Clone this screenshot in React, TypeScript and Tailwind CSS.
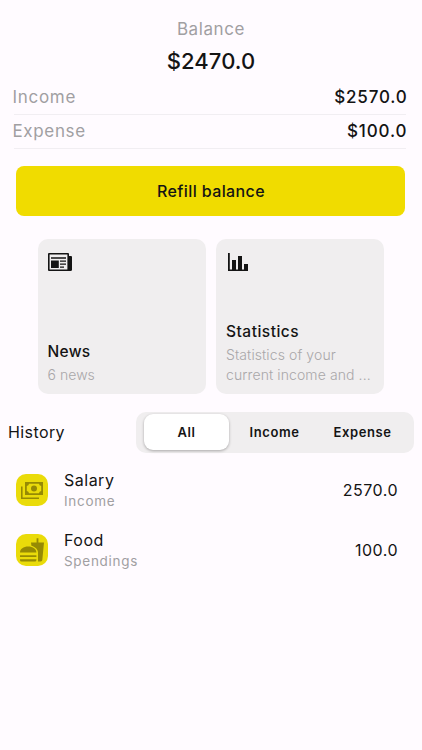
import { useState } from "react";
import clsx from "clsx";

type Operation = { title: string; kind: string; amount: string; icon: React.ReactNode };

const tabs = [
  { name: "All", width: "w-[85px]" },
  { name: "Income", width: "w-[91px]" },
  { name: "Expense", width: "w-[85px]" },
];

function NewsIcon() {
  return (
    <svg width="24" height="18" viewBox="0 0 24 18" fill="#141414">
      <path fillRule="evenodd" d="M1 0h19a1 1 0 0 1 1 1v17H1a1 1 0 0 1-1-1V1a1 1 0 0 1 1-1zM1.600 1.600v14.800h17.800V1.600z" />
      <path d="M21 3h2a1 1 0 0 1 1 1v12.500a1.500 1.500 0 0 1-1.500 1.500H20V3z" />
      <path d="M3 4.300h15v1.400H3zM3 7.600h7.800v7.400H3zM12 7.400h6v1.400h-6zM12 10.400h6v1.400h-6zM12 13.400h4v1.400h-4z" />
    </svg>
  );
}

function ChartIcon() {
  return (
    <svg width="20" height="18" viewBox="0 0 20 18" fill="#141414">
      <path d="M0 0h1.800v16.400H4V7h4v9.400h2V3h4v13.400h2V11h4v7H0z" />
    </svg>
  );
}

function CashIcon() {
  return (
    <svg width="22" height="17" viewBox="0 0 22 17" fill="#968a04">
      <path d="M0 4.500h1.600v10.900H18V17H0z" />
      <path
        fillRule="evenodd"
        d="M4 0h18v13H4zM8 1.800A2.400 2.400 0 0 1 5.800 4v5A2.400 2.400 0 0 1 8 11.200h10A2.400 2.400 0 0 1 20.200 9V4A2.400 2.400 0 0 1 18 1.800z"
      />
      <circle cx="13" cy="6.500" r="3" />
    </svg>
  );
}

function FoodIcon() {
  return (
    <svg width="24" height="24" viewBox="0 0 24 24" fill="#968a04">
      <path d="M0 14.500C0 11 3.500 8.500 8.200 8.500s8.200 2.500 8.200 6zM0 17.200h16.400v1.800H0zM0 21.200h16.400v.8a1.500 1.500 0 0 1-1.500 1.500H1.500A1.500 1.500 0 0 1 0 22z" />
      <path d="M11 4.500h5.600V.300h1.800v4.200H24l-1.700 17.600a1.500 1.500 0 0 1-1.500 1.400H18v-9c0-3-2.400-5.600-6.600-6.800z" />
    </svg>
  );
}

const operations: Operation[] = [
  { title: "Salary", kind: "Income", amount: "2570.0", icon: <CashIcon /> },
  { title: "Food", kind: "Spendings", amount: "100.0", icon: <FoodIcon /> },
];

export default function App() {
  const [tab, setTab] = useState("All");

  return (
    <div className="min-h-[750px] w-full bg-[#fffbff] font-['Inter',sans-serif] text-[#141414]">
      {/* Balance */}
      <header className="flex flex-col items-center pt-[18px]">
        <p className="text-[17px] leading-[22px] tracking-[0.6px] text-[#a19fa2]">Balance</p>
        <p className="mt-[7px] text-[22px] leading-7 font-medium tracking-[0.1px]">$2470.0</p>
      </header>

      <dl className="mt-1.5 pr-4 pl-3.5 text-[17px]">
        <div className="flex h-[34px] items-center justify-between border-b border-[#f1eef2]">
          <dt className="-ml-[1.5px] tracking-[0.7px] text-[#a19fa2]">Income</dt>
          <dd className="-mr-[1.5px] font-medium tracking-[0.8px]">$2570.0</dd>
        </div>
        <div className="flex h-[34px] items-center justify-between border-b border-[#f1eef2]">
          <dt className="-ml-[1.5px] tracking-[0.65px] text-[#a19fa2]">Expense</dt>
          <dd className="-mr-[1.5px] font-medium tracking-[0.9px]">$100.0</dd>
        </div>
      </dl>

      <div className="mt-[17px] pr-[17px] pl-4">
        <button className="h-[50px] w-full rounded-lg bg-[#f0dc00] pl-px text-base font-medium tracking-[0.4px]">
          Refill balance
        </button>
      </div>

      {/* Cards */}
      <section className="mt-[22.5px] flex gap-2.5 pl-[37.500px]">
        <article className="flex h-[155px] w-[168.500px] flex-col justify-between rounded-[10px] bg-[#f0eeef] px-2.5 pt-3.5 pb-[9px]">
          <NewsIcon />
          <div>
            <h2 className="text-[15.5px] leading-[26px] font-medium tracking-[0.3px]">News</h2>
            <p className="text-sm leading-5 font-light tracking-[0.05px] text-[#a9a7a9]">6 news</p>
          </div>
        </article>
        <article className="flex h-[155px] w-[168px] flex-col justify-between rounded-[10px] bg-[#f0eeef] px-2.5 pt-3.5 pb-[9px]">
          <div className="pl-0.5">
            <ChartIcon />
          </div>
          <div>
            <h2 className="text-[15.5px] leading-[26px] font-medium tracking-[0.5px]">Statistics</h2>
            <p className="text-sm leading-5 font-light tracking-[0.1px] whitespace-nowrap text-[#a9a7a9]">
              Statistics of your
              <br />
              current income and ...
            </p>
          </div>
        </article>
      </section>

      {/* History */}
      <section className="mt-[18.5px]">
        <div className="flex items-center justify-between pr-2 pl-2">
          <h2 className="pb-px text-base tracking-[0.4px]">History</h2>
          <div className="flex h-[41px] w-[278px] items-start rounded-[10px] bg-[#f0eeef] pt-0.5 pl-2">
            {tabs.map((t) => (
              <button
                key={t.name}
                onClick={() => setTab(t.name)}
                className={clsx(
                  "h-9 rounded-[9px] pt-0.5 text-[13px] font-semibold tracking-[0.6px]",
                  t.width,
                  tab === t.name && "bg-white shadow-[0_1px_3px_rgba(0,0,0,0.3)]",
                )}
              >
                {t.name}
              </button>
            ))}
          </div>
        </div>

        <ul className="mt-[7px]">
          {operations.map((op) => (
            <li key={op.title} className="flex h-[60px] items-center pr-6 pl-4">
              <div className="flex size-8 items-center justify-center rounded-[10px] bg-[#eadb0a]">{op.icon}</div>
              <div className="ml-4 flex-1">
                <p className="text-base leading-[22px] tracking-[0.5px]">{op.title}</p>
                <p className="text-[13.5px] leading-[21px] tracking-[0.7px] text-[#a19fa2]">{op.kind}</p>
              </div>
              <p className="text-base tracking-[0.5px]">{op.amount}</p>
            </li>
          ))}
        </ul>
      </section>
    </div>
  );
}
